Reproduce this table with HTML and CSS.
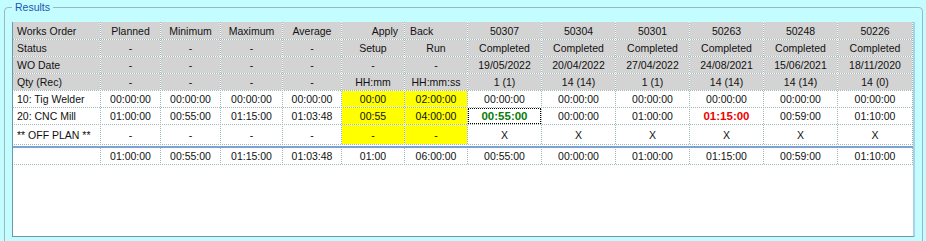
FILE: index.html
```html
<!DOCTYPE html>
<html>
<head>
<meta charset="utf-8">
<link rel="stylesheet" href="styles.css">
</head>
<body>
<fieldset class="results">
  <legend>Results</legend>
  <div class="panel">
    <div class="grid main">
      <div class="c h l">Works Order</div><div class="c h">Planned</div><div class="c h">Minimum</div><div class="c h">Maximum</div><div class="c h">Average</div><div class="c h r">Apply</div><div class="c h lb">Back</div><div class="c h">50307</div><div class="c h">50304</div><div class="c h">50301</div><div class="c h">50263</div><div class="c h">50248</div><div class="c h">50226</div>
      <div class="c h l">Status</div><div class="c h">-</div><div class="c h">-</div><div class="c h">-</div><div class="c h">-</div><div class="c h">Setup</div><div class="c h">Run</div><div class="c h">Completed</div><div class="c h">Completed</div><div class="c h">Completed</div><div class="c h">Completed</div><div class="c h">Completed</div><div class="c h">Completed</div>
      <div class="c h l">WO Date</div><div class="c h">-</div><div class="c h">-</div><div class="c h">-</div><div class="c h">-</div><div class="c h">-</div><div class="c h">-</div><div class="c h">19/05/2022</div><div class="c h">20/04/2022</div><div class="c h">27/04/2022</div><div class="c h">24/08/2021</div><div class="c h">15/06/2021</div><div class="c h">18/11/2020</div>
      <div class="c h l">Qty (Rec)</div><div class="c h">-</div><div class="c h">-</div><div class="c h">-</div><div class="c h">-</div><div class="c h">HH:mm</div><div class="c h">HH:mm:ss</div><div class="c h">1 (1)</div><div class="c h">14 (14)</div><div class="c h">1 (1)</div><div class="c h">14 (14)</div><div class="c h">14 (14)</div><div class="c h">14 (0)</div>
      <div class="c l">10: Tig Welder</div><div class="c">00:00:00</div><div class="c">00:00:00</div><div class="c">00:00:00</div><div class="c">00:00:00</div><div class="c y">00:00</div><div class="c y">02:00:00</div><div class="c">00:00:00</div><div class="c">00:00:00</div><div class="c">00:00:00</div><div class="c">00:00:00</div><div class="c">00:00:00</div><div class="c">00:00:00</div>
      <div class="c l">20: CNC Mill</div><div class="c">01:00:00</div><div class="c">00:55:00</div><div class="c">01:15:00</div><div class="c">01:03:48</div><div class="c y">00:55</div><div class="c y">04:00:00</div><div class="c good focus">00:55:00</div><div class="c">00:00:00</div><div class="c">01:00:00</div><div class="c bad">01:15:00</div><div class="c">00:59:00</div><div class="c">01:10:00</div>
      <div class="c l">** OFF PLAN **</div><div class="c">-</div><div class="c">-</div><div class="c">-</div><div class="c">-</div><div class="c y">-</div><div class="c y">-</div><div class="c">X</div><div class="c">X</div><div class="c">X</div><div class="c">X</div><div class="c">X</div><div class="c">X</div>
    </div>
    <div class="divider"></div>
    <div class="grid">
      <div class="c l"></div><div class="c">01:00:00</div><div class="c">00:55:00</div><div class="c">01:15:00</div><div class="c">01:03:48</div><div class="c">01:00</div><div class="c">06:00:00</div><div class="c">00:55:00</div><div class="c">00:00:00</div><div class="c">01:00:00</div><div class="c">01:15:00</div><div class="c">00:59:00</div><div class="c">01:10:00</div>
    </div>
  </div>
</fieldset>
</body>
</html>
```
FILE: styles.css
```css
html, body {
  margin: 0;
  padding: 0;
  background: #c4fdff;
  overflow: hidden;
  height: 241px;
}

body {
  font-family: "Liberation Sans", Arial, sans-serif;
  font-size: 10.5px;
  color: #111;
}

.results {
  box-sizing: border-box;
  margin: 1px 0 0 4px;
  width: 919px;
  min-height: 260px;
  border: 1px solid #98b9c4;
  border-radius: 4px;
  padding: 8px 7px 0 7px;
}

.results legend {
  padding: 0 3px;
  line-height: 13px;
  color: #1d55b0;
  font-size: 10.5px;
}

.panel {
  box-sizing: border-box;
  width: 903px;
  height: 215px;
  background: #fff;
  border-left: 1px solid #6f95b3;
  border-bottom: 1px solid #6f95b3;
  border-right: 2px solid #a6d3e6;
}

.grid {
  display: grid;
  grid-template-columns: 87px 59px 59px 61px 58px 62px 62px 73px 73px 73px 73px 73px 74px;
  grid-auto-rows: 16px;
  gap: 1px;
  padding: 0 1px 1px 0;
  width: max-content;
  background-image: conic-gradient(#9db9ba 25%, #ffffff 0 50%, #9db9ba 0 75%, #ffffff 0);
  background-size: 2px 2px;
}

.grid.main {
  grid-template-rows: 17px 16px 16px 16px 16px 16px 19px;
}

.c {
  background: #fff;
  white-space: nowrap;
  overflow: hidden;
  display: flex;
  align-items: center;
  justify-content: center;
}

.c.h { background: #d3d3d3; }
.c.l { justify-content: flex-start; padding-left: 4px; }
.c.r { justify-content: flex-end; padding-right: 6px; }
.c.lb { justify-content: flex-start; padding-left: 5px; }
.c.y { background: #ffff00; }

.c.good {
  color: #0a7a0a;
  font-weight: bold;
  font-size: 11.5px;
}

.c.bad {
  color: #ee0000;
  font-weight: bold;
  font-size: 11.5px;
}

.focus {
  outline: 1px dotted #000;
  outline-offset: -1px;
}

.divider {
  height: 2px;
  margin-top: 1px;
  background: #7da0d6;
}
```
